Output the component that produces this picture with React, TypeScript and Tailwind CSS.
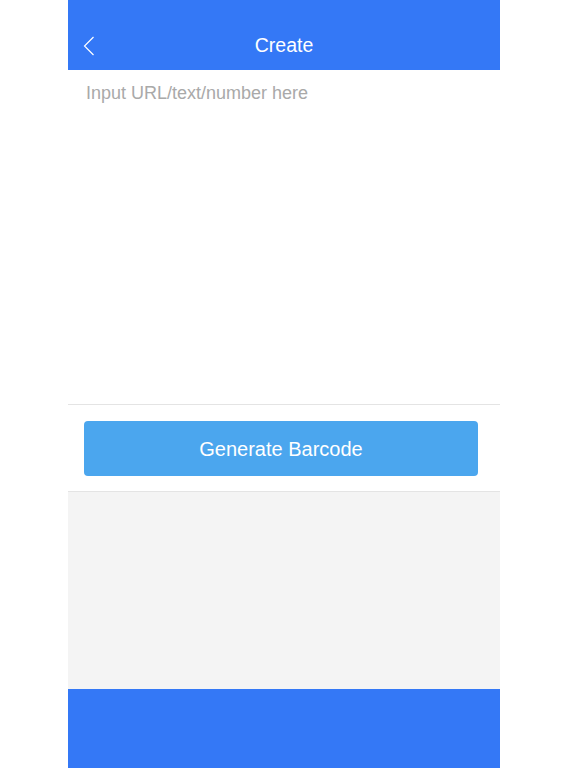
import React from 'react';

export default function App() {
  return (
    <div className="w-[576px] h-[768px] bg-white" style={{ fontFamily: '"Liberation Sans", Arial, sans-serif' }}>
      <div className="ml-[68px] w-[432px] h-[768px] flex flex-col">
        <header className="h-[70px] shrink-0 bg-[#3478f6] relative flex items-center justify-center pt-[22px]">
          <button className="absolute left-[11px] top-[35px] w-[20px] h-[22px] flex items-center justify-center">
            <svg width="12" height="20" viewBox="0 0 12 20" fill="none">
              <path d="M10.5 1 L1.5 10 L10.5 19" stroke="white" strokeWidth="1.2" />
            </svg>
          </button>
          <h1 className="text-white text-[19.5px] leading-none">Create</h1>
        </header>

        <div className="h-[335px] shrink-0 border-b border-[#e4e4e4] px-[18px] pt-[10px]">
          <textarea
            className="w-full h-full resize-none outline-none text-[18px] text-[#333] placeholder:text-[#a9a9a9] bg-transparent"
            placeholder="Input URL/text/number here"
          />
        </div>

        <div className="h-[87px] shrink-0 border-b border-[#e4e4e4] px-[16px] pt-[16px]">
          <button className="w-[394px] h-[55px] rounded-[4px] bg-[#4ba6ee] text-white text-[20px]">
            Generate Barcode
          </button>
        </div>

        <div className="flex-1 bg-[#f4f4f4]" />

        <footer className="h-[79px] shrink-0 bg-[#3478f6]" />
      </div>
    </div>
  );
}
